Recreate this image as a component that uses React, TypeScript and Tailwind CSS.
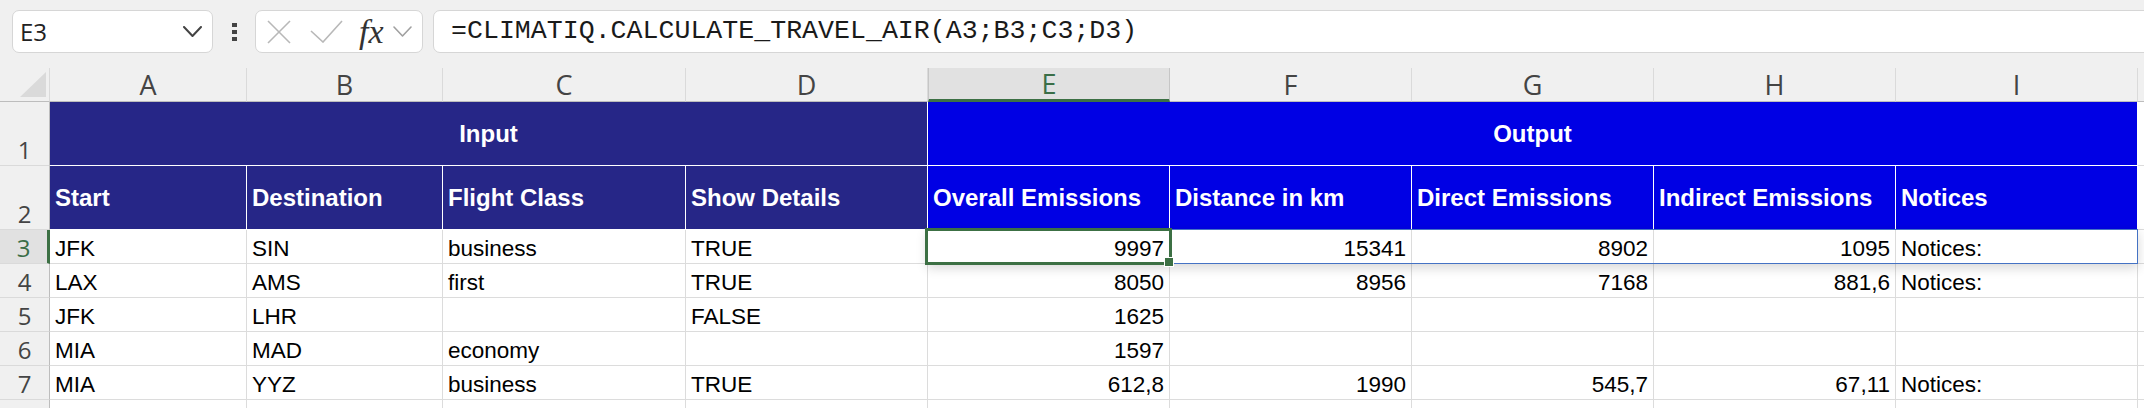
import React from 'react';

const colW = ['w-[197px]', 'w-[196px]', 'w-[243px]', 'w-[242px]', 'w-[242px]', 'w-[242px]', 'w-[242px]', 'w-[242px]', 'w-[242px]'];
const letters = ['A', 'B', 'C', 'D', 'E', 'F', 'G', 'H', 'I'];
const heads = ['Start', 'Destination', 'Flight Class', 'Show Details', 'Overall Emissions', 'Distance in km', 'Direct Emissions', 'Indirect Emissions', 'Notices'];
const numeric = [false, false, false, false, true, true, true, true, false];

const rows = [
  ['JFK', 'SIN', 'business', 'TRUE', '9997', '15341', '8902', '1095', 'Notices:'],
  ['LAX', 'AMS', 'first', 'TRUE', '8050', '8956', '7168', '881,6', 'Notices:'],
  ['JFK', 'LHR', '', 'FALSE', '1625', '', '', '', ''],
  ['MIA', 'MAD', 'economy', '', '1597', '', '', '', ''],
  ['MIA', 'YYZ', 'business', 'TRUE', '612,8', '1990', '545,7', '67,11', 'Notices:'],
  ['', '', '', '', '', '', '', '', ''],
];

const arial = "font-['Liberation_Sans',Arial,sans-serif]";
const ui = "font-['Open_Sans','Noto_Sans',sans-serif]";

function Toolbar() {
  return (
    <div className="flex h-[68px] items-start bg-[#f0f0f0] pl-[12px] pt-[10px]">
      <div className="flex h-[43px] w-[201px] items-center justify-between rounded-[7px] border border-[#d6d6d6] bg-white pl-[7px] pr-[10px]">
        <span className={`${ui} text-[24px] leading-none text-[#222]`}>E3</span>
        <svg width="19" height="11" viewBox="0 0 19 11" fill="none" stroke="#444" strokeWidth="2" strokeLinecap="round" strokeLinejoin="round">
          <polyline points="1,1 9.5,10 18,1" />
        </svg>
      </div>
      <div className="ml-[18px] flex h-[43px] w-[6px] flex-col items-center justify-center gap-[3px]">
        <div className="h-[4px] w-[5px] bg-[#444]" />
        <div className="h-[4px] w-[5px] bg-[#444]" />
        <div className="h-[4px] w-[5px] bg-[#444]" />
      </div>
      <div className="ml-[18px] flex h-[43px] w-[168px] items-center rounded-[7px] border border-[#d6d6d6] bg-white pl-[11px]">
        <svg width="24" height="24" viewBox="0 0 24 24" fill="none" stroke="#b8b8b8" strokeWidth="1.6">
          <line x1="1" y1="1" x2="23" y2="23" />
          <line x1="23" y1="1" x2="1" y2="23" />
        </svg>
        <svg className="ml-[19px]" width="33" height="23" viewBox="0 0 33 23" fill="none" stroke="#b8b8b8" strokeWidth="1.6">
          <polyline points="1,11 13,22 32,1" />
        </svg>
        <span className="ml-[16px] font-['Liberation_Serif',serif] text-[34px] italic leading-none text-[#333]">fx</span>
        <svg className="ml-[9px]" width="19" height="11" viewBox="0 0 19 11" fill="none" stroke="#a0a0a0" strokeWidth="1.6" strokeLinecap="round" strokeLinejoin="round">
          <polyline points="1,1 9.5,10 18,1" />
        </svg>
      </div>
      <div className="-mr-[20px] ml-[10px] flex h-[43px] flex-1 items-center rounded-[7px] border border-[#d6d6d6] bg-white pl-[17px]">
        <span className="font-['Liberation_Mono','Courier_New',monospace] text-[26.6px] leading-none text-[#1a1a1a]">
          =CLIMATIQ.CALCULATE_TRAVEL_AIR(A3;B3;C3;D3)
        </span>
      </div>
    </div>
  );
}

function ColumnHeader() {
  return (
    <div className="flex h-[34px]">
      <div className="relative w-[50px] border-b border-r border-[#bdbdbd] border-r-[#dadada] bg-[#f0f0f0]">
        <svg className="absolute left-0 top-0" width="49" height="33" viewBox="0 0 49 33">
          <polygon points="46,4 46,29 20,29" fill="#dadada" />
        </svg>
      </div>
      {letters.map((l, i) =>
        l === 'E' ? (
          <div key={l} className={`${colW[i]} flex items-center justify-center border-b-[3px] border-l border-r border-[#c6c6c6] border-b-[#3c7044] bg-[#e1e1e1] ${ui} text-[27px] leading-none text-[#3a6e47]`}>
            {l}
          </div>
        ) : (
          <div key={l} className={`${colW[i]} flex items-center justify-center border-b border-r border-[#dadada] border-b-[#bdbdbd] bg-[#f0f0f0] ${ui} text-[27px] leading-none text-[#444]`}>
            {l}
          </div>
        )
      )}
      <div className="flex-1 border-b border-[#bdbdbd] bg-[#f0f0f0]" />
    </div>
  );
}

function RowNum({ n, h, active }: { n?: number; h: string; active?: boolean }) {
  return (
    <div
      className={`${h} flex w-[50px] items-end justify-center border-b border-[#dadada] pb-[3px] ${ui} text-[24px] leading-none ${
        active ? 'border-r-[3px] border-r-[#3c7044] bg-[#e1e1e1] text-[#3a6e47]' : 'border-r border-r-[#bdbdbd] bg-[#f0f0f0] text-[#444]'
      }`}
    >
      {n}
    </div>
  );
}

export default function App() {
  return (
    <div className="h-[408px] w-[2144px] overflow-hidden bg-white">
      <Toolbar />
      <div className="relative">
        <ColumnHeader />

        <div className="flex h-[64px]">
          <RowNum n={1} h="h-[64px]" />
          <div className={`flex w-[878px] items-center justify-center border-b border-r border-white bg-[#262687] ${arial} text-[24px] font-bold text-white`}>
            Input
          </div>
          <div className={`flex w-[1210px] items-center justify-center border-b border-r border-white bg-[#0000e4] ${arial} text-[24px] font-bold text-white`}>
            Output
          </div>
          <div className="flex-1 border-b border-[#dcdcdc]" />
        </div>

        <div className="flex h-[64px]">
          <RowNum n={2} h="h-[64px]" />
          {heads.map((t, i) => (
            <div
              key={t}
              className={`${colW[i]} flex items-center border-b border-r border-white pl-[5px] ${arial} text-[24px] font-bold text-white ${
                i < 4 ? 'bg-[#262687]' : 'bg-[#0000e4]'
              }`}
            >
              {t}
            </div>
          ))}
          <div className="flex-1 border-b border-[#dcdcdc]" />
        </div>

        {rows.map((r, ri) => (
          <div key={ri} className="flex h-[34px]">
            {/* row 8 only peeks in at the bottom, its number sits below the fold */}
            <RowNum n={ri < 5 ? ri + 3 : undefined} h="h-[34px]" active={ri === 0} />
            {r.map((v, ci) => (
              <div
                key={ci}
                className={`${colW[ci]} flex items-end border-b border-r border-[#dcdcdc] px-[5px] pb-px ${arial} text-[22.5px] leading-[26px] text-black ${
                  numeric[ci] ? 'justify-end' : 'justify-start'
                }`}
              >
                {v}
              </div>
            ))}
            <div className="flex-1 border-b border-[#dcdcdc]" />
          </div>
        ))}

        <div className="pointer-events-none absolute left-[927px] top-[161px] h-[35px] w-[1211px] border border-[#4472c4] shadow-[0_4px_12px_rgba(0,0,0,0.16)]" />
        <div className="pointer-events-none absolute left-[925px] top-[160px] h-[37px] w-[247px] border-[3px] border-[#3c7044]" />
        <div className="pointer-events-none absolute left-[1164px] top-[189px] h-[10px] w-[10px] border border-white bg-[#3c7044]" />
      </div>
    </div>
  );
}
